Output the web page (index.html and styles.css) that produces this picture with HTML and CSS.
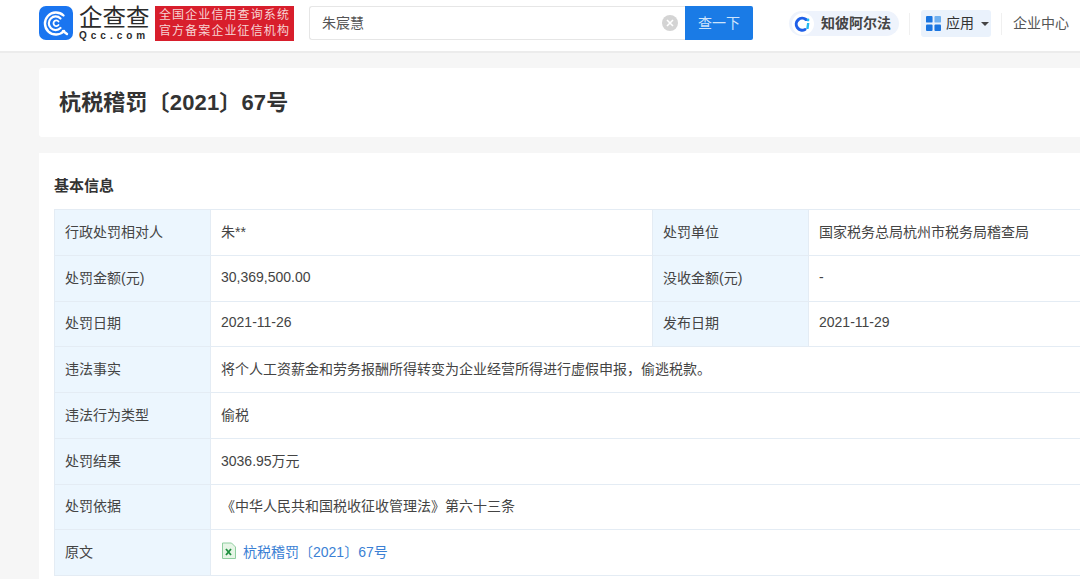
FILE: index.html
```html
<!DOCTYPE html>
<html lang="zh-CN">
<head>
    <meta charset="UTF-8">
    <title>杭税稽罚〔2021〕67号</title>
    <link rel="stylesheet" href="styles.css">
</head>
<body>

    <!-- Top bar -->
    <header class="topbar">
        <svg class="logo-icon" width="34" height="34" viewBox="0 0 34 34">
            <rect width="34" height="34" rx="7" fill="#1a75f0"/>
            <path d="M24.500 9.500A11 11 0 1 0 25 25" fill="none" stroke="#fff" stroke-width="2.400" stroke-linecap="round"/>
            <path d="M21.500 12.500A6.800 6.800 0 1 0 21.500 22" fill="none" stroke="#fff" stroke-width="2.200" stroke-linecap="round"/>
            <path d="M19.500 15.500A2.800 2.800 0 1 0 19.500 19" fill="none" stroke="#fff" stroke-width="1.800" stroke-linecap="round"/>
            <path d="M24 25l4 3" stroke="#fff" stroke-width="2.400" stroke-linecap="round"/>
        </svg>
        <div class="logo-text">
            <div class="logo-name">企查查</div>
            <div class="logo-domain">Qcc.com</div>
        </div>
        <div class="logo-badge">
            <div>全国企业信用查询系统</div>
            <div>官方备案企业征信机构</div>
        </div>

        <div class="search">
            <div class="search-input">
                <span>朱宸慧</span>
                <svg width="16" height="16" viewBox="0 0 16 16">
                    <circle cx="8" cy="8" r="8" fill="#d4d4d4"/>
                    <path d="M5 5l6 6M11 5l-6 6" stroke="#fff" stroke-width="1.600"/>
                </svg>
            </div>
            <div class="search-btn">查一下</div>
        </div>

        <div class="alpha">
            <svg width="22" height="22" viewBox="0 0 22 22">
                <circle cx="11" cy="11" r="11" fill="#fff"/>
                <path d="M14 6.500A6 6 0 1 0 13 16.500" fill="none" stroke="#1f5fe8" stroke-width="3" stroke-linecap="round"/>
                <circle cx="16" cy="7" r="1.400" fill="#22b8f0"/>
                <path d="M15 10h2.400l-.8 6h-2.400z" fill="#22b8f0"/>
            </svg>
            <span>知彼阿尔法</span>
        </div>
        <div class="divider"></div>
        <div class="apps">
            <svg width="15" height="15" viewBox="0 0 16 16">
                <rect width="7" height="7" rx="1" fill="#1a75e0"/>
                <rect x="9" width="7" height="7" rx="1" fill="#6fb0f0"/>
                <rect y="9" width="7" height="7" rx="1" fill="#1a75e0"/>
                <rect x="9" y="9" width="7" height="7" rx="1" fill="#1a75e0"/>
            </svg>
            <span>应用</span>
            <i class="caret"></i>
        </div>
        <div class="divider"></div>
        <div class="nav-link">企业中心</div>
    </header>

    <main class="page">
        <section class="card title-card">
            <h1>杭税稽罚〔2021〕67号</h1>
        </section>

        <section class="card info-card">
            <h2>基本信息</h2>
            <table>
                <colgroup>
                    <col class="col-label">
                    <col class="col-value">
                    <col class="col-label">
                    <col class="col-last">
                </colgroup>
                <tr>
                    <th>行政处罚相对人</th>
                    <td>朱**</td>
                    <th>处罚单位</th>
                    <td>国家税务总局杭州市税务局稽查局</td>
                </tr>
                <tr>
                    <th>处罚金额(元)</th>
                    <td>30,369,500.00</td>
                    <th>没收金额(元)</th>
                    <td>-</td>
                </tr>
                <tr>
                    <th>处罚日期</th>
                    <td>2021-11-26</td>
                    <th>发布日期</th>
                    <td>2021-11-29</td>
                </tr>
                <tr>
                    <th>违法事实</th>
                    <td colspan="3">将个人工资薪金和劳务报酬所得转变为企业经营所得进行虚假申报，偷逃税款。</td>
                </tr>
                <tr>
                    <th>违法行为类型</th>
                    <td colspan="3">偷税</td>
                </tr>
                <tr>
                    <th>处罚结果</th>
                    <td colspan="3">3036.95万元</td>
                </tr>
                <tr>
                    <th>处罚依据</th>
                    <td colspan="3">《中华人民共和国税收征收管理法》第六十三条</td>
                </tr>
                <tr>
                    <th>原文</th>
                    <td colspan="3">
                        <span class="file-link">
                            <svg width="16" height="18" viewBox="0 0 16 18">
                                <path d="M1.500 1h9l4 4v11.500h-13z" fill="#e6f5e6" stroke="#8fce9f"/>
                                <path d="M5 7l5 6M10 7l-5 6" stroke="#1e8e3e" stroke-width="1.800"/>
                            </svg>
                            杭税稽罚〔2021〕67号
                        </span>
                    </td>
                </tr>
            </table>
        </section>
    </main>

</body>
</html>
```

FILE: styles.css
```css
html, body {
    height: 100%;
}
body {
    margin: 0;
    overflow: hidden;
    background-color: #f6f6f6;
    color: #333;
    font-family: "Liberation Sans", "Noto Sans CJK SC", sans-serif;
    font-size: 14px;
}

/* top bar */
.topbar {
    height: 53px;
    box-sizing: border-box;
    padding: 6px 0 0 39px;
    display: flex;
    align-items: flex-start;
    background-color: #fff;
    border-bottom: 2px solid #ececec;
}
.logo-icon {
    flex-shrink: 0;
}
.logo-text {
    width: 72px;
    margin-left: 6px;
    color: #2b2b2b;
    white-space: nowrap;
}
.logo-name {
    font-size: 23.500px;
    line-height: 25px;
}
.logo-domain {
    font-size: 10px;
    line-height: 9px;
    letter-spacing: 4px;
    font-weight: bold;
}
.logo-badge {
    width: 139px;
    height: 35px;
    margin-left: 4px;
    box-sizing: border-box;
    padding-top: 1px;
    background-color: #d81e2c;
    color: #f6d4d4;
    font-size: 12px;
    line-height: 16px;
    letter-spacing: 1.100px;
    text-align: center;
    white-space: nowrap;
}
.search {
    display: flex;
    margin-left: 15px;
    height: 34px;
}
.search-input {
    width: 376px;
    box-sizing: border-box;
    padding: 0 7px 0 12px;
    display: flex;
    align-items: center;
    justify-content: space-between;
    border: 1px solid #e6e6e6;
    border-right: none;
    border-radius: 3px 0 0 3px;
    color: #555;
}
.search-input span {
    margin-top: -3px;
}
.search-btn {
    width: 68px;
    box-sizing: border-box;
    padding-bottom: 3px;
    display: flex;
    align-items: center;
    justify-content: center;
    background-color: #1a7be6;
    color: #cfe4fb;
    border-radius: 0 2px 2px 0;
}
.alpha {
    display: flex;
    align-items: center;
    gap: 7px;
    height: 25px;
    margin: 5px 0 0 36px;
    padding: 0 8px 0 3px;
    background-color: #eef3fc;
    border-radius: 13px;
    font-weight: bold;
    color: #444;
}
.alpha span, .apps span {
    margin-top: -3px;
}
.divider {
    width: 1px;
    height: 22px;
    margin: 7px 10px 0;
    background-color: #f0f0f0;
}
.apps {
    display: flex;
    align-items: center;
    gap: 5px;
    width: 70px;
    height: 27px;
    box-sizing: border-box;
    margin-top: 4px;
    margin-left: 1px;
    padding-left: 5px;
    background-color: #eaf2fc;
    border-radius: 3px;
    color: #333;
    white-space: nowrap;
}
.caret {
    border-left: 4px solid transparent;
    border-right: 4px solid transparent;
    border-top: 4px solid #444;
    margin-left: 2px;
}
.nav-link {
    margin-top: 6px;
    margin-left: 1px;
    color: #555;
    white-space: nowrap;
}

/* cards */
.page {
    padding: 15px 0 0 39px;
}
.card {
    background-color: #fff;
}
.title-card {
    height: 69px;
    box-sizing: border-box;
    padding: 0 20px;
    display: flex;
    align-items: center;
    border-radius: 3px 0 0 3px;
}
h1 {
    margin: 0;
    font-size: 22px;
    line-height: 30px;
    letter-spacing: 0.150px;
    color: #333;
}
.info-card {
    margin-top: 16px;
    padding: 22px 0 16px 15px;
}
h2 {
    margin: 0 0 13px;
    font-size: 15px;
    line-height: 21px;
    color: #333;
}

/* info table */
table {
    width: 1026px;
    table-layout: fixed;
    border-collapse: collapse;
}
.col-label {
    width: 156px;
}
.col-value {
    width: 442px;
}
.col-last {
    width: 272px;
}
th, td {
    height: 45.750px;
    box-sizing: border-box;
    padding: 0 10px 3px;
    border: 1px solid #e4ecf4;
    text-align: left;
    font-weight: normal;
    color: #444;
}
td:last-child {
    border-right: none;
}
th {
    background-color: #ecf6fe;
}
.file-link {
    display: flex;
    align-items: center;
    gap: 6px;
    color: #3b7fd4;
}
```
